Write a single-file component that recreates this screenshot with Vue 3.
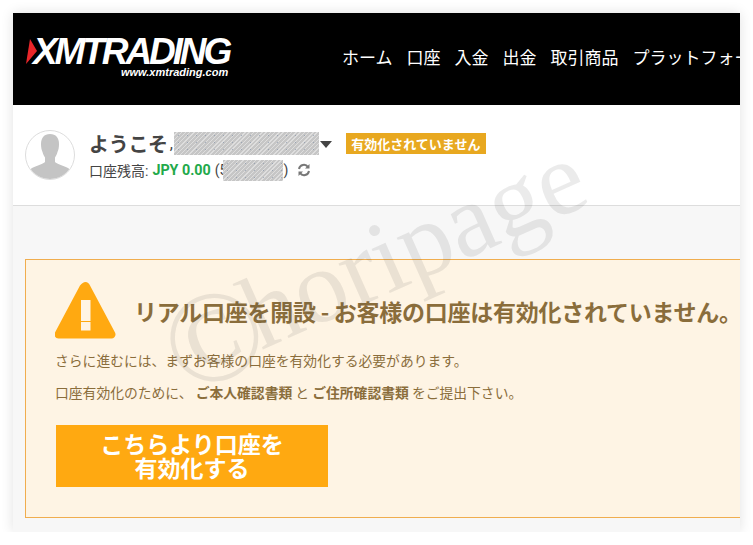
<script setup>
const navItems = ['ホーム', '口座', '入金', '出金', '取引商品', 'プラットフォーム']
</script>

<template>
  <div class="frame">
    <header class="header">
      <div class="logo">
        <div class="logo-main">
          <svg class="logo-arrow" width="11" height="26" viewBox="0 0 11 26"><polygon points="4,0 11,12 0,25" fill="#e8262a" /></svg>
          <span class="logo-text">XMTRADING</span>
        </div>
        <div class="logo-url">www.xmtrading.com</div>
      </div>
      <nav class="nav">
        <span v-for="item in navItems" :key="item">{{ item }}</span>
      </nav>
    </header>

    <section class="account">
      <div class="avatar">
        <svg width="50" height="50" viewBox="0 0 50 50">
          <defs><clipPath id="round"><circle cx="25" cy="25" r="24" /></clipPath></defs>
          <circle cx="25" cy="25" r="24.5" fill="#fff" stroke="#ddd" />
          <path clip-path="url(#round)" fill="#c4c4c4" d="M25 4c-6 0-9 4-9 10 0 3 .5 6 1.500 8 .5 2 1.500 4 2.500 5.500v4.500c-2 2-9 4-13 6-2 1-3 3-4 5v8h44v-8c-1-2-2-4-4-5-4-2-11-4-13-6v-4.500c1-1.500 2-3.500 2.500-5.500 1-2 1.500-5 1.500-8 0-6-3-10-9-10z" />
        </svg>
      </div>
      <div class="account-info">
        <div class="welcome">
          <strong class="hello">ようこそ</strong><span class="comma">,</span>
          <span class="mask mask-name"></span>
          <span class="caret"></span>
          <span class="badge">有効化されていません</span>
        </div>
        <div class="balance">
          <span>口座残高:</span>
          <b class="amount">JPY 0.00</b>
          <span class="paren">(</span><span class="digit">5</span><span class="mask mask-id"></span><span class="paren-end">)</span>
          <svg class="refresh" width="14" height="14" viewBox="0 0 14 14" fill="none" stroke="#777" stroke-width="2">
            <path d="M2 6a5 5 0 0 1 9-2" />
            <path d="M12 8a5 5 0 0 1-9 2" />
            <path d="M12.500 1v4.500H8" fill="#777" stroke="none" />
            <path d="M1.500 13V8.500H6" fill="#777" stroke="none" />
          </svg>
        </div>
      </div>
    </section>

    <main class="content">
      <div class="alert">
        <div class="alert-head">
          <svg width="61" height="57" viewBox="0 0 61 57">
            <path fill="#ffa911" d="M30.500 0c2 0 3.500 1.500 4.500 3.500l25 47c1.500 3-.5 6-3.500 6h-53c-3 0-5-3-3.500-6l25-47C27 1.500 28.500 0 30.500 0z" />
            <rect x="26" y="18" width="9.500" height="21" fill="#fff4e4" />
            <rect x="26" y="40" width="9.500" height="8.500" fill="#fff4e4" />
          </svg>
          <h1>リアル口座を開設 - お客様の口座は有効化されていません。</h1>
        </div>
        <p class="line-one">さらに進むには、まずお客様の口座を有効化する必要があります。</p>
        <p class="line-two">口座有効化のために、 <b>ご本人確認書類</b> と <b>ご住所確認書類</b> をご提出下さい。</p>
        <div class="cta">こちらより口座を<br />有効化する</div>
      </div>
    </main>

    <div class="watermark"><span class="mark">©</span>horipage</div>
  </div>
</template>

<style>
html, body { margin: 0; background: #fff; }
</style>

<style scoped>
.frame {
  position: relative;
  width: 727px;
  height: 519px;
  margin: 13px 0 0 13px;
  background: #f7f7f7;
  overflow: hidden;
  font-family: "Noto Sans CJK JP", Roboto, sans-serif;
  box-shadow: 0 0 12px rgba(0, 0, 0, .12);
}
.header {
  height: 92px;
  background: #000;
  display: flex;
  align-items: flex-start;
  white-space: nowrap;
}
.logo { margin: 25px 0 0 13px; width: 300px; flex: none; }
.logo-main { display: flex; align-items: center; height: 28px; }
.logo-arrow { flex: none; }
.logo-text {
  color: #fff;
  font: italic 700 37px/28px "Liberation Sans", sans-serif;
  letter-spacing: -3.100px;
  margin-left: -4px;
}
.logo-url {
  color: #fff;
  font: italic 700 11px/12px "Liberation Sans", sans-serif;
  margin: 0 0 0 95px;
}
.nav {
  display: flex;
  gap: 14px;
  margin: 29px 0 0 16px;
  color: #fff;
  font-size: 17px;
  line-height: 29px;
  flex: none;
}
.account {
  height: 101px;
  box-sizing: border-box;
  background: #fff;
  border-bottom: 1px solid #ddd;
  display: flex;
  padding: 25px 0 0 12px;
}
.avatar { width: 50px; height: 50px; flex: none; }
.account-info { margin-left: 14px; white-space: nowrap; }
.welcome { display: flex; align-items: center; height: 27px; }
.hello { font-size: 20px; line-height: 27px; color: #444; font-weight: 700; letter-spacing: -.300px; }
.comma { font: 400 16px/27px Roboto, sans-serif; color: #444; margin-left: 2px; width: 4px; }
.mask {
  display: inline-block;
  background:
    radial-gradient(circle, rgba(110, 130, 160, .5) .6px, transparent .9px) 0 0 / 9px 7px,
    repeating-linear-gradient(135deg, #c6c6c6 0 2px, #dedede 2px 3px);
}
.mask-name { width: 145px; height: 23px; }
.caret {
  width: 0;
  height: 0;
  border-left: 6px solid transparent;
  border-right: 6px solid transparent;
  border-top: 7px solid #444;
  margin: 2px 0 0 1px;
}
.badge {
  margin-left: 14px;
  background: #e8a820;
  color: #fff;
  font-size: 13px;
  font-weight: 700;
  line-height: 21px;
  height: 21px;
  width: 140px;
  text-align: center;
}
.balance {
  display: flex;
  align-items: center;
  height: 24px;
  margin-top: 1px;
  font-size: 14px;
  color: #444;
  font-family: Roboto, "Noto Sans CJK JP", sans-serif;
}
.amount { color: #22a94a; margin-left: 4px; font-weight: 700; font-size: 14.300px; }
.paren { margin-left: 4px; }
.digit { width: 3px; overflow: hidden; }
.paren-end { margin-left: 1px; }
.mask-id { width: 60px; height: 21px; }
.refresh { margin-left: 9px; }
.content { padding: 53px 0 0 12px; }
.alert {
  box-sizing: border-box;
  width: 760px;
  height: 259px;
  border: 1px solid #f0ad4e;
  background: #fef4e4;
  padding: 22px 0 0 29px;
  color: #8a6d3b;
}
.alert-head { display: flex; align-items: center; }
.alert-head h1 {
  margin: 0 0 0 18px;
  font-size: 23px;
  font-weight: 700;
  white-space: nowrap;
  line-height: 30px;
  letter-spacing: -.26px;
}
.alert p { margin: 0; font-size: 13.800px; line-height: 20px; }
.line-one { padding-top: 11px; }
.line-two { padding-top: 12px; white-space: nowrap; }
.cta {
  margin: 23px 0 0 1px;
  width: 272px;
  height: 62px;
  background: #ffa911;
  color: #fff;
  font-size: 23px;
  font-weight: 700;
  line-height: 24px;
  text-align: center;
  padding-top: 6px;
  box-sizing: border-box;
}
.watermark {
  position: absolute;
  left: 135px;
  top: 199px;
  font: 104px/100px "Liberation Serif", serif;
  color: rgba(70, 70, 70, .11);
  transform: rotate(-24deg);
  white-space: nowrap;
  pointer-events: none;
}
.mark {
  font-size: 130px;
  line-height: 0;
  letter-spacing: -12px;
  vertical-align: -12px;
}
</style>
